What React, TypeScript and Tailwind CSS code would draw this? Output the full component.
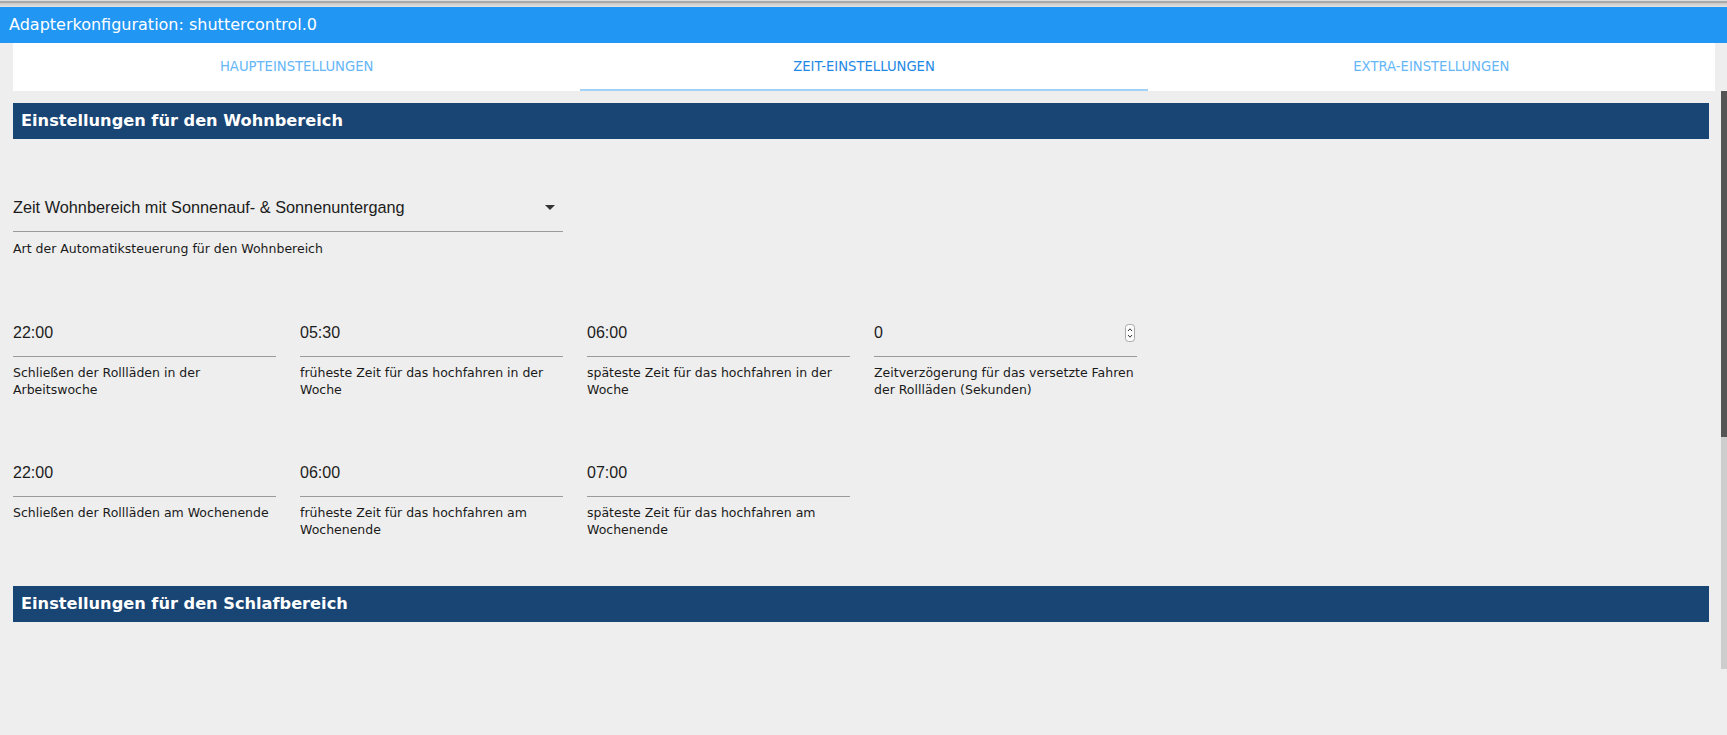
import React from "react";

function Spinner() {
  return (
    <svg width="10" height="18" viewBox="0 0 10 18" className="shrink-0">
      <rect x="0.5" y="0.5" width="9" height="17" rx="3" fill="#fbfbfb" stroke="#a8a8a8" />
      <path d="M3 7 L5 4.8 L7 7" fill="none" stroke="#333" strokeWidth="1" />
      <path d="M3 11 L5 13.2 L7 11" fill="none" stroke="#333" strokeWidth="1" />
    </svg>
  );
}

function Field({ value, label, spinner }: { value: string; label: string; spinner?: boolean }) {
  return (
    <div className="w-[263px]">
      <div className="flex items-center justify-between pb-[14px] border-b border-[#9a9a9a]">
        <span className="h-[19px] text-[16px] leading-[19px] text-[#1c1c1c] font-['Liberation_Sans',Arial,sans-serif]">
          {value}
        </span>
        {spinner && (
          <span className="mr-[2px]">
            <Spinner />
          </span>
        )}
      </div>
      <div className="mt-[7px] text-[12.5px] leading-[17px] text-[#1a1a1a] font-['DejaVu_Sans',sans-serif]">
        {label}
      </div>
    </div>
  );
}

function SectionHeader({ title }: { title: string }) {
  return (
    <div className="h-[36px] flex items-center pl-[8px] bg-[#194575] text-white text-[16.2px] font-bold font-['DejaVu_Sans',sans-serif]">
      {title}
    </div>
  );
}

export default function App() {
  return (
    <div className="w-full h-[735px] overflow-hidden bg-[#eeeeee] flex flex-col">
      <div className="h-px bg-[#dedede]" />
      <div className="h-[2px] bg-[#a9a9a9]" />
      <div className="h-[4px] bg-gradient-to-b from-[#c6c6c6] to-[#e4e4e4]" />
      <div className="h-[36px] bg-[#2196f3] flex items-center pl-[9px] text-white text-[16px] font-['DejaVu_Sans',sans-serif]">
        Adapterkonfiguration: shuttercontrol.0
      </div>
      <div className="ml-[13px] mr-[12px] h-[48px] bg-white grid grid-cols-3 text-[13.2px] font-['DejaVu_Sans',sans-serif]">
        <div className="flex items-center justify-center text-[#64b6f7]">HAUPTEINSTELLUNGEN</div>
        <div className="relative flex items-center justify-center text-[#1e88e5]">
          ZEIT-EINSTELLUNGEN
          <div className="absolute left-0 right-0 bottom-0 h-[2px] bg-[#a3d2f9]" />
        </div>
        <div className="flex items-center justify-center text-[#64b6f7]">EXTRA-EINSTELLUNGEN</div>
      </div>
      <div className="flex flex-1 min-h-0">
        <div className="flex-1 pl-[13px] pr-[12px] pt-[12px]">
          <SectionHeader title="Einstellungen für den Wohnbereich" />
          <div className="mt-[59px] w-[550px]">
            <div className="flex items-center justify-between pb-[14px] border-b border-[#9a9a9a]">
              <span className="h-[19px] text-[16.3px] leading-[19px] text-[#1c1c1c] font-['Liberation_Sans',Arial,sans-serif]">
                Zeit Wohnbereich mit Sonnenauf- &amp; Sonnenuntergang
              </span>
              <svg width="10" height="5" viewBox="0 0 10 5" className="mr-[8px]">
                <path d="M0 0 L10 0 L5 5 Z" fill="#333" />
              </svg>
            </div>
            <div className="mt-[8px] text-[12.5px] leading-[17px] text-[#1a1a1a] font-['DejaVu_Sans',sans-serif]">
              Art der Automatiksteuerung für den Wohnbereich
            </div>
          </div>
          <div className="mt-[66px] grid grid-cols-[repeat(4,263px)] gap-x-[24px] gap-y-[65px] items-start">
            <Field value="22:00" label="Schließen der Rollläden in der Arbeitswoche" />
            <Field value="05:30" label="früheste Zeit für das hochfahren in der Woche" />
            <Field value="06:00" label="späteste Zeit für das hochfahren in der Woche" />
            <Field value="0" label="Zeitverzögerung für das versetzte Fahren der Rollläden (Sekunden)" spinner />
            <Field value="22:00" label="Schließen der Rollläden am Wochenende" />
            <Field value="06:00" label="früheste Zeit für das hochfahren am Wochenende" />
            <Field value="07:00" label="späteste Zeit für das hochfahren am Wochenende" />
          </div>
          <div className="mt-[48px]">
            <SectionHeader title="Einstellungen für den Schlafbereich" />
          </div>
        </div>
        <div className="w-[6px] flex flex-col">
          <div className="h-[346px] bg-[#555555]" />
          <div className="h-[232px] bg-[#cdcdcd]" />
        </div>
      </div>
    </div>
  );
}
